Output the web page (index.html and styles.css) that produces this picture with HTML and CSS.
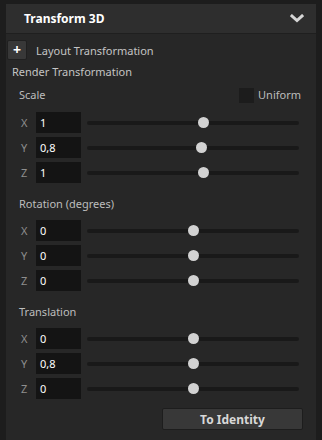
FILE: index.html
```html
<!DOCTYPE html>
<html>
<head>
  <title>Transform 3D</title>
  <link rel="stylesheet" href="styles.css">
</head>
<body>
  <div class="panel">
    <div class="panel-header">
      <span class="panel-title">Transform 3D</span>
      <svg class="chevron" width="14" height="9" viewBox="0 0 14 9">
        <polyline points="2,2 7,6.5 12,2" fill="none" stroke="#d6d6d6" stroke-width="3" stroke-linecap="square"/>
      </svg>
    </div>

    <div class="panel-body">
      <div class="layout-row">
        <div class="plus-btn">+</div>
        <span class="layout-label">Layout Transformation</span>
      </div>

      <div class="render-title">Render Transformation</div>

      <div class="section">
        <div class="section-head scale-head">
          <span>Scale</span>
          <label class="uniform"><span class="checkbox"></span>Uniform</label>
        </div>
        <div class="rows scale-rows">
          <div class="row">
            <span class="axis">X</span>
            <div class="value">1</div>
            <div class="slider"><div class="track"></div><div class="thumb" style="left: 116px"></div></div>
          </div>
          <div class="row">
            <span class="axis">Y</span>
            <div class="value">0,8</div>
            <div class="slider"><div class="track"></div><div class="thumb" style="left: 114px"></div></div>
          </div>
          <div class="row">
            <span class="axis">Z</span>
            <div class="value">1</div>
            <div class="slider"><div class="track"></div><div class="thumb" style="left: 116px"></div></div>
          </div>
        </div>

        <div class="section-head">Rotation (degrees)</div>
        <div class="rows">
          <div class="row">
            <span class="axis">X</span>
            <div class="value">0</div>
            <div class="slider"><div class="track"></div><div class="thumb" style="left: 106px"></div></div>
          </div>
          <div class="row">
            <span class="axis">Y</span>
            <div class="value">0</div>
            <div class="slider"><div class="track"></div><div class="thumb" style="left: 106px"></div></div>
          </div>
          <div class="row">
            <span class="axis">Z</span>
            <div class="value">0</div>
            <div class="slider"><div class="track"></div><div class="thumb" style="left: 106px"></div></div>
          </div>
        </div>

        <div class="section-head">Translation</div>
        <div class="rows">
          <div class="row">
            <span class="axis">X</span>
            <div class="value">0</div>
            <div class="slider"><div class="track"></div><div class="thumb" style="left: 106px"></div></div>
          </div>
          <div class="row">
            <span class="axis">Y</span>
            <div class="value">0,8</div>
            <div class="slider"><div class="track"></div><div class="thumb" style="left: 106px"></div></div>
          </div>
          <div class="row">
            <span class="axis">Z</span>
            <div class="value">0</div>
            <div class="slider"><div class="track"></div><div class="thumb" style="left: 106px"></div></div>
          </div>
        </div>
      </div>

      <div class="actions">
        <button class="identity-btn">To Identity</button>
      </div>
    </div>
  </div>
</body>
</html>
```

FILE: styles.css
```css
html, body {
  margin: 0;
  height: 100%;
}

body {
  background: #1d1d1d;
  font-family: "Noto Sans", "Open Sans", sans-serif;
  font-size: 11px;
  color: #c4c4c4;
  overflow: hidden;
}

.panel {
  margin: 4px 6px 0;
  height: 436px;
  background: #272727;
}

.panel-header {
  height: 29px;
  background: #2e2e2e;
  border-bottom: 1px solid #1f1f1f;
  display: flex;
  align-items: center;
  padding: 0 12px 0 18px;
}

.panel-title {
  flex: 1;
  color: #fff;
  font-weight: bold;
  font-size: 12px;
}

.chevron {
  display: block;
}

.layout-row {
  display: flex;
  align-items: center;
  margin-top: 6px;
  height: 20px;
}

.plus-btn {
  flex-shrink: 0;
  width: 20px;
  height: 20px;
  box-sizing: border-box;
  margin-left: 1px;
  background: #383838;
  border: 1px solid #202020;
  border-radius: 2px;
  color: #fff;
  font-weight: bold;
  font-size: 14px;
  line-height: 17px;
  text-align: center;
}

.layout-label {
  margin-left: 9px;
}

.render-title {
  margin-top: 4px;
  height: 16px;
  line-height: 16px;
  padding-left: 6px;
}

.section {
  padding-left: 13px;
  padding-right: 17px;
}

.section-head {
  height: 16px;
  line-height: 16px;
  margin-top: 13px;
  color: #bdbdbd;
}

.scale-head {
  margin-top: 7px;
  display: flex;
  justify-content: space-between;
  align-items: center;
}

.uniform {
  display: flex;
  align-items: center;
  color: #bdbdbd;
  margin-right: -2px;
}

.checkbox {
  width: 15px;
  height: 15px;
  background: #1c1c1c;
  margin-right: 4px;
}

.rows {
  margin-top: 8px;
  display: flex;
  flex-direction: column;
  gap: 4px;
}

.scale-rows {
  margin-top: 9px;
}

.row {
  display: flex;
  align-items: center;
  height: 21px;
}

.axis {
  width: 17px;
  padding-left: 2px;
  box-sizing: border-box;
  color: #8e8e8e;
}

.value {
  width: 45px;
  height: 21px;
  line-height: 21px;
  box-sizing: border-box;
  padding-left: 4px;
  background: #141414;
  color: #fff;
}

.slider {
  flex: 1;
  margin-left: 6px;
  height: 21px;
  position: relative;
}

.track {
  position: absolute;
  left: 0;
  right: 0;
  top: 9px;
  height: 4px;
  border-radius: 2px;
  background: #191919;
}

.thumb {
  position: absolute;
  top: 5px;
  width: 11px;
  height: 11px;
  margin-left: -5px;
  border-radius: 50%;
  background: #d2d2d2;
}

.actions {
  display: flex;
  justify-content: flex-end;
  padding-right: 13px;
  margin-top: 9px;
}

.identity-btn {
  width: 141px;
  height: 22px;
  background: #383838;
  border: 1px solid #1d1d1d;
  border-radius: 2px;
  color: #d8d8d8;
  font-family: inherit;
  font-size: 12px;
  font-weight: bold;
  padding: 0;
}
```
